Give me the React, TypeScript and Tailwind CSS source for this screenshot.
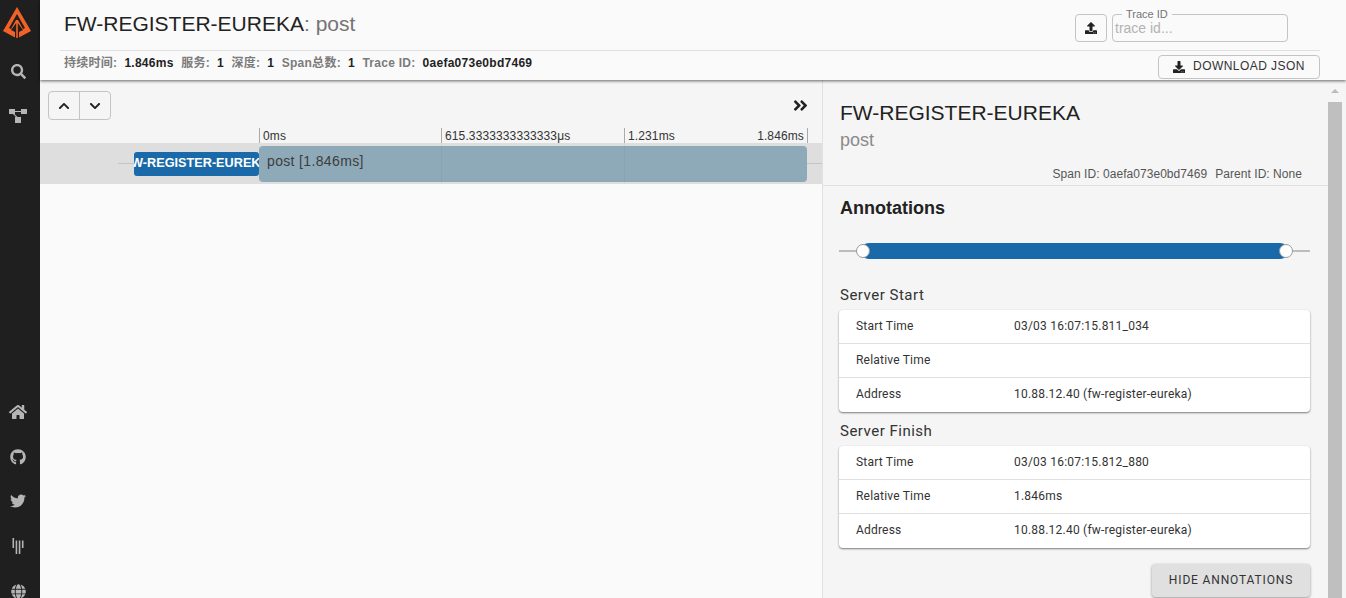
import { FaAngleDoubleRight, FaChevronDown, FaChevronUp, FaDownload, FaGithub, FaGitter, FaGlobe, FaHome, FaSearch, FaTwitter, FaUpload } from 'react-icons/fa'

const sans = "font-['Liberation_Sans','Noto_Sans_CJK_SC',sans-serif]"
const roboto = "font-['Roboto','Liberation_Sans',sans-serif]"

const Logo = () => (
  <svg width="28" height="31" viewBox="0 0 28 31" className="mr-[2px] block">
    <path d="M14 0 L28 24 L16 30.5 L16 25 L20 23 L14.8 16 L14.8 31 L13.2 31 L13.2 16 L8 23 L12 25 L12 30.5 L0 24 Z M14 7 L6 21 L8 22 L13 13 L15 13 L20 22 L22 21 Z" fill="#f26227" fillRule="evenodd" />
  </svg>
)

const NetworkIcon = () => (
  <svg width="18" height="14" viewBox="0 0 18 14" className="mt-[30px] block" fill="currentColor">
    <rect x="0" y="0" width="6" height="5" />
    <rect x="12" y="0" width="6" height="5" />
    <rect x="6" y="8" width="6" height="6" />
    <path d="M6 2 H12 V3 H6 Z M4 5 L7 8 H8.5 L5.5 5 Z" />
  </svg>
)

const Sidebar = () => (
  <aside className="flex w-10 shrink-0 flex-col items-center justify-between overflow-hidden bg-[#1f1f1f] pr-[4px] text-[#b5b5b5]">
    <div className="flex flex-col items-center pt-[7px]">
      <Logo />
      <FaSearch className="mt-[26px] text-[15px]" />
      <NetworkIcon />
    </div>
    <div className="-mb-[1px] flex flex-col items-center gap-[29px]">
      <FaHome className="-mb-px text-[18px]" />
      <FaGithub className="-mb-px text-[16px]" />
      <FaTwitter className="text-[16px]" />
      <FaGitter className="mb-px text-[16px]" />
      <FaGlobe className="text-[15px]" />
    </div>
  </aside>
)

const Stat = ({ label, value }: { label: string; value: string }) => (
  <span className="mr-[7.5px]">
    <span className="text-[#7b7b7b]">{label}:</span>
    <span className="ml-[7px] text-[#222]">{value}</span>
  </span>
)

const Header = () => (
  <header className={`relative z-10 h-20 shrink-0 bg-[#fafafa] pl-5 pr-[26px] shadow-[0_1px_3px_rgba(0,0,0,0.6)] ${sans}`}>
    <div className="flex h-[51px] items-start justify-between border-b border-[#e0e0e0] pr-[32px]">
      <h1 className="pl-1 pt-[12px] text-[21px] leading-[24px] text-[#222]">
        FW-REGISTER-EUREKA<span className="text-[#757575]">: post</span>
      </h1>
      <div className="flex items-start gap-[5px] pt-[14px]">
        <button className="flex h-[28px] w-[32px] items-center justify-center rounded border border-[#c4c4c4] text-[12px] text-[#222]">
          <FaUpload />
        </button>
        <fieldset className="-mt-[6px] h-[34px] w-[176px] rounded border border-[#c4c4c4] px-[2px]">
          <legend className="ml-[7px] px-[4px] text-[11px] leading-[12px] text-[#757575]">Trace ID</legend>
          <div className="text-[14px] leading-[16px] text-[#b3b3b3]">trace id...</div>
        </fieldset>
      </div>
    </div>
    <div className="flex items-start justify-between">
      <div className="pl-1 pt-[5px] text-[12px] font-bold leading-[15px] tracking-[0.27px]">
        <Stat label="持续时间" value="1.846ms" />
        <Stat label="服务" value="1" />
        <Stat label="深度" value="1" />
        <Stat label="Span总数" value="1" />
        <Stat label="Trace ID" value="0aefa073e0bd7469" />
      </div>
      <button className="mt-[4px] flex h-[24px] w-[162px] items-center justify-center gap-[8px] rounded border border-[#c4c4c4] bg-[#fafafa] text-[12px] tracking-[0.45px] text-[#333]">
        <FaDownload className="text-[12px] text-[#222]" />
        <span className="mb-[2px]">DOWNLOAD JSON</span>
      </button>
    </div>
  </header>
)

const Timeline = () => (
  <section className={`flex min-w-0 flex-1 flex-col bg-[#fafafa] ${sans}`}>
    <div className="flex flex-col bg-[#f5f5f5]">
      <div className="flex h-[40px] items-end justify-between pl-2 pr-[13px]">
        <div className="flex h-[29px] w-[63px] rounded border border-[#c4c4c4] text-[12px] text-[#222]">
          <button className="flex w-[31px] items-center justify-center border-r border-[#c4c4c4]"><FaChevronUp /></button>
          <button className="flex flex-1 items-center justify-center"><FaChevronDown /></button>
        </div>
        <FaAngleDoubleRight className="mb-[6px] text-[17px] text-[#222]" />
      </div>
      <div className="mt-[8px] flex h-[15px] pl-[219px] text-[12px] leading-[17px] tracking-[0.12px] text-[#333]">
        <div className="w-[182px] shrink-0 border-l border-[#aaa] pl-[3px]">0ms</div>
        <div className="w-[183px] shrink-0 border-l border-[#aaa] pl-[3px]">615.3333333333333μs</div>
        <div className="flex w-[184px] shrink-0 justify-between border-x border-[#aaa] px-[3px]">
          <span>1.231ms</span>
          <span>1.846ms</span>
        </div>
      </div>
    </div>
    <div className="relative flex h-[41px] bg-[#dedede]">
      <div className="flex w-[219px] items-center justify-end">
        <div className="h-px w-[16px] bg-[#c4c4c4]" />
        <div className="mt-px flex h-[24px] w-[125px] items-center justify-center overflow-hidden rounded-[3px] bg-[#1a6aa9] text-[12.7px] font-bold text-white">
          <span className="whitespace-nowrap">FW-REGISTER-EUREKA</span>
        </div>
      </div>
      <div className="mt-[3px] h-[36px] w-[548px] rounded-[4px] bg-[#8eaab8] pl-2 text-[14px] leading-[30px] tracking-[0.35px] text-[#3d3d3d]">
        post [1.846ms]
      </div>
      <div className="mt-[20px] h-px flex-1 bg-[#c4c4c4]" />
      {/* tick lines showing through the bar */}
      <div className="pointer-events-none absolute left-[401px] top-0 h-full w-px bg-black/[0.03]" />
      <div className="pointer-events-none absolute left-[584px] top-0 h-full w-px bg-black/[0.03]" />
    </div>
  </section>
)

const rowsStart = [
  ['Start Time', '03/03 16:07:15.811_034'],
  ['Relative Time', ''],
  ['Address', '10.88.12.40 (fw-register-eureka)'],
]
const rowsFinish = [
  ['Start Time', '03/03 16:07:15.812_880'],
  ['Relative Time', '1.846ms'],
  ['Address', '10.88.12.40 (fw-register-eureka)'],
]

const AnnotationCard = ({ title, rows }: { title: string; rows: string[][] }) => (
  <div>
    <div className={`h-[22px] pl-px pt-px text-[15px] leading-[21px] tracking-[0.5px] text-[#333] ${roboto}`}>{title}</div>
    <div className={`mt-[4px] rounded bg-white shadow-[0_1px_2px_rgba(0,0,0,0.5)] ${roboto}`}>
      {rows.map(([k, v], i) => (
        <div key={k} className={`flex h-[34px] items-center pl-[17px] text-[12px] text-[#333] ${i < 2 ? 'border-b border-[#e0e0e0] pb-px' : 'pb-[2px]'}`}>
          <span className="w-[158px] tracking-[0.2px]">{k}</span>
          <span className="tracking-[0.22px]">{v}</span>
        </div>
      ))}
    </div>
  </div>
)

const Detail = () => (
  <aside className="flex w-[524px] shrink-0 border-l border-[#e0e0e0] bg-[#f5f5f5]">
    <div className="min-w-0 flex-1 overflow-hidden">
      <div className={`h-[106px] border-b border-[#e0e0e0] pl-[17px] pr-[26px] pt-[21px] ${sans}`}>
        <div className="text-[21px] leading-[24px] text-[#222]">FW-REGISTER-EUREKA</div>
        <div className="mt-[4px] text-[18px] leading-[22px] text-[#8a8a8a]">post</div>
        <div className="mt-[16px] text-right text-[12px] leading-[14px] tracking-[0.05px] text-[#555]">
          Span ID: 0aefa073e0bd7469<span className="ml-[8px]">Parent ID: None</span>
        </div>
      </div>
      <div className="pl-[16px] pr-[18px] pt-[11px]">
        <div className={`pl-px text-[18px] font-bold leading-[22px] text-[#222] ${sans}`}>Annotations</div>
        <div className="mt-[24px] flex h-[16px] items-center">
          <div className="h-[2px] w-[22px] bg-[#bdbdbd]" />
          <div className="relative h-[16px] flex-1 rounded-full bg-[#1a6aa9]">
            <div className="absolute -left-[5px] top-[1px] h-[14px] w-[14px] rounded-full border border-[#999] bg-white" />
            <div className="absolute -right-[5px] top-[1px] h-[14px] w-[14px] rounded-full border border-[#999] bg-white" />
          </div>
          <div className="h-[2px] w-[22px] bg-[#bdbdbd]" />
        </div>
        <div className="mt-[25px] flex flex-col gap-[8px]">
          <AnnotationCard title="Server Start" rows={rowsStart} />
          <AnnotationCard title="Server Finish" rows={rowsFinish} />
        </div>
        <div className="mt-[16px] flex justify-end">
          <button className={`h-[33px] w-[158px] rounded bg-[#e0e0e0] pb-px text-[12px] tracking-[0.85px] text-[#333] shadow-[0_1px_3px_rgba(0,0,0,0.4)] ${roboto}`}>
            HIDE ANNOTATIONS
          </button>
        </div>
      </div>
    </div>
    {/* scrollbar */}
    <div className="flex w-[18px] shrink-0 flex-col items-start bg-[#f5f5f5]">
      <div className="flex h-[22px] w-[14px] items-center justify-center">
        <div className="h-0 w-0 border-x-[4px] border-b-[4px] border-x-transparent border-b-[#bbb]" />
      </div>
      <div className="w-[14px] flex-1 bg-[#bfbfbf]" />
    </div>
  </aside>
)

export default function App() {
  return (
    <div className="flex h-[598px] w-[1346px] overflow-hidden bg-[#fafafa]">
      <Sidebar />
      <main className="flex min-w-0 flex-1 flex-col">
        <Header />
        <div className="flex min-h-0 flex-1">
          <Timeline />
          <Detail />
        </div>
      </main>
    </div>
  )
}
